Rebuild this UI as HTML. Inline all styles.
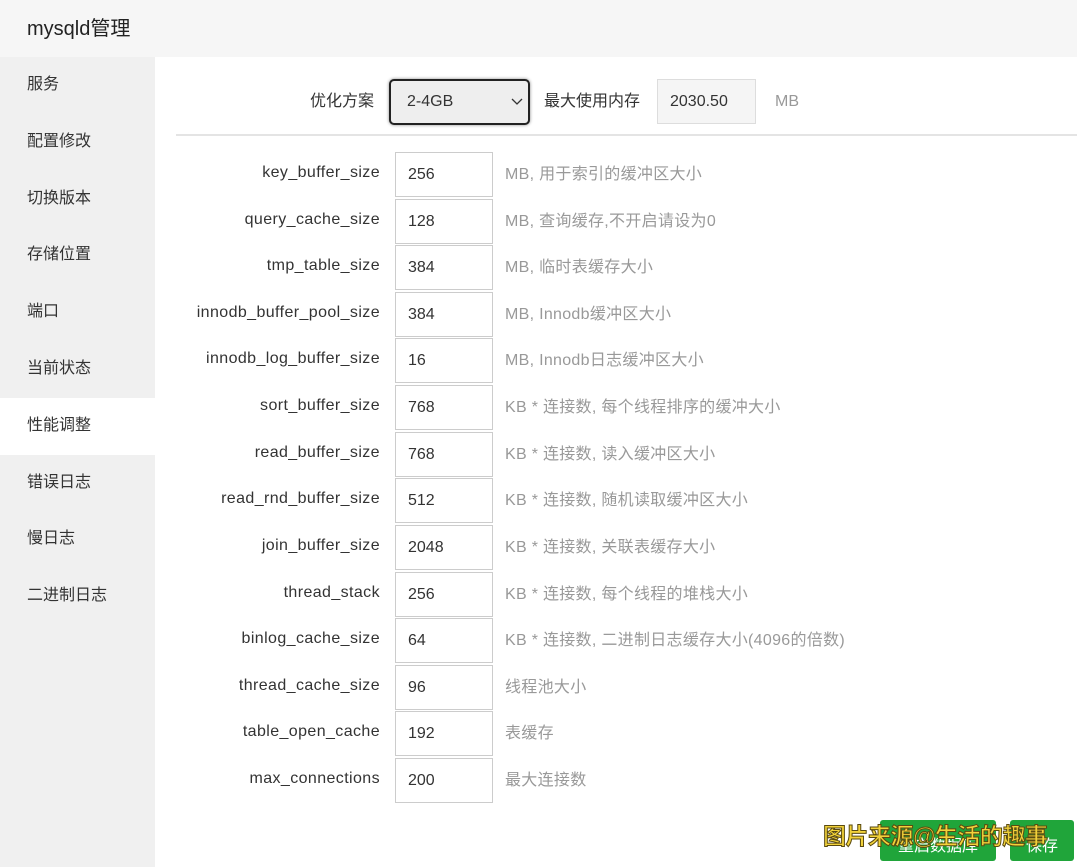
<!DOCTYPE html>
<html><head><meta charset="utf-8"><style>
*{box-sizing:border-box;margin:0;padding:0}
body{width:1077px;height:867px;overflow:hidden;background:#fff;font-family:"Liberation Sans","Noto Sans CJK SC",sans-serif;position:relative;color:#333}
.hd{position:absolute;left:0;top:0;width:1077px;height:57px;background:#f6f6f6;font-size:20px;padding:12px 0 0 27px;color:#222}
.sb{position:absolute;left:0;top:57px;width:155px;height:810px;background:#f0f0f0}
.sb div{height:56.8px;line-height:56px;padding-left:27px;font-size:16px;color:#333}
.sb .on{background:#fff}
.top{position:absolute;top:79px;height:45px;line-height:45px;font-size:16px}
.sel{position:absolute;left:389px;top:79px;width:141px;height:46px;border:2px solid #222;border-radius:5px;background:#eee;font-size:16px;line-height:42px;padding-left:16px;box-shadow:0 0 3px #888}
.hr{position:absolute;left:176px;top:134px;width:901px;height:2px;background:#e4e4e4}
.row{position:absolute;left:0;height:45px;width:1077px}
.row .l{position:absolute;right:697px;top:0;line-height:42px;font-size:16px;letter-spacing:0.4px;color:#333;white-space:nowrap}
.row .i{position:absolute;left:395px;top:0;width:98px;height:45px;border:1px solid #ccc;font-size:16px;line-height:43px;padding-left:12px;color:#333}
.row .d{position:absolute;left:505px;top:0;line-height:46px;font-size:16px;letter-spacing:0.3px;color:#999;white-space:nowrap}
.btn{position:absolute;top:820px;height:41px;background:#20a53a;border-radius:3px;color:#fff;font-size:16px;text-align:center;line-height:41px}
.wm{position:absolute;left:823px;top:817px;font-size:23px;color:#f2d23a;font-weight:bold;-webkit-text-stroke:1px #5a4a10;white-space:nowrap;letter-spacing:-0.5px}
</style></head><body>
<div class="hd">mysqld管理</div>
<div class="sb"><div>服务</div><div>配置修改</div><div>切换版本</div><div>存储位置</div><div>端口</div><div>当前状态</div><div class="on">性能调整</div><div>错误日志</div><div>慢日志</div><div>二进制日志</div></div>
<div class="top" style="left:310px">优化方案</div>
<div class="sel">2-4GB<svg style="position:absolute;right:5px;top:17px" width="12" height="8" viewBox="0 0 12 8"><path d="M1 1l5 5 5-5" fill="none" stroke="#333" stroke-width="1.3"/></svg></div>
<div class="top" style="left:544px">最大使用内存</div>
<div style="position:absolute;left:657px;top:79px;width:99px;height:45px;border:1px solid #ddd;background:#f5f5f5;font-size:16px;line-height:44px;padding-left:12px">2030.50</div>
<div class="top" style="left:775px;color:#999">MB</div>
<div class="hr"></div>
<div class="row" style="top:152px"><span class="l">key_buffer_size</span><span class="i">256</span><span class="d">MB, 用于索引的缓冲区大小</span></div>
<div class="row" style="top:199px"><span class="l">query_cache_size</span><span class="i">128</span><span class="d">MB, 查询缓存,不开启请设为0</span></div>
<div class="row" style="top:245px"><span class="l">tmp_table_size</span><span class="i">384</span><span class="d">MB, 临时表缓存大小</span></div>
<div class="row" style="top:292px"><span class="l">innodb_buffer_pool_size</span><span class="i">384</span><span class="d">MB, Innodb缓冲区大小</span></div>
<div class="row" style="top:338px"><span class="l">innodb_log_buffer_size</span><span class="i">16</span><span class="d">MB, Innodb日志缓冲区大小</span></div>
<div class="row" style="top:385px"><span class="l">sort_buffer_size</span><span class="i">768</span><span class="d">KB * 连接数, 每个线程排序的缓冲大小</span></div>
<div class="row" style="top:432px"><span class="l">read_buffer_size</span><span class="i">768</span><span class="d">KB * 连接数, 读入缓冲区大小</span></div>
<div class="row" style="top:478px"><span class="l">read_rnd_buffer_size</span><span class="i">512</span><span class="d">KB * 连接数, 随机读取缓冲区大小</span></div>
<div class="row" style="top:525px"><span class="l">join_buffer_size</span><span class="i">2048</span><span class="d">KB * 连接数, 关联表缓存大小</span></div>
<div class="row" style="top:572px"><span class="l">thread_stack</span><span class="i">256</span><span class="d">KB * 连接数, 每个线程的堆栈大小</span></div>
<div class="row" style="top:618px"><span class="l">binlog_cache_size</span><span class="i">64</span><span class="d">KB * 连接数, 二进制日志缓存大小(4096的倍数)</span></div>
<div class="row" style="top:665px"><span class="l">thread_cache_size</span><span class="i">96</span><span class="d">线程池大小</span></div>
<div class="row" style="top:711px"><span class="l">table_open_cache</span><span class="i">192</span><span class="d">表缓存</span></div>
<div class="row" style="top:758px"><span class="l">max_connections</span><span class="i">200</span><span class="d">最大连接数</span></div>
<div class="btn" style="left:880px;width:116px;padding-top:6px">重启数据库</div>
<div class="btn" style="left:1010px;width:64px;padding-top:6px">保存</div>
<div class="wm">图片来源@生活的趣事</div>
</body></html>
